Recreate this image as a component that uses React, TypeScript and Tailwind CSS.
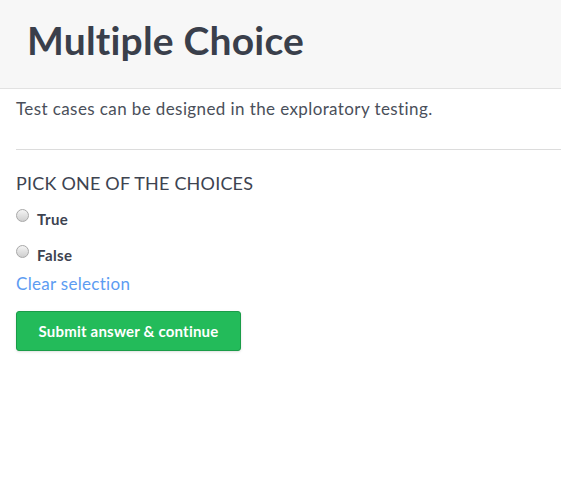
export default function App() {
  return (
    <div className="min-h-screen bg-white text-[#3d4350]" style={{ fontFamily: 'Lato, "Open Sans", sans-serif' }}>
      <div className="h-[89px] border-b border-[#e2e2e2] bg-[#f7f7f7] px-[27px] pt-[15px]">
        <h1 className="text-[39px] font-bold leading-[50px] tracking-[0.2px] text-[#3a3f4b]">Multiple Choice</h1>
      </div>
      <div className="pl-4">
        <p className="pt-[9px] text-[17px] leading-[22px] tracking-[0.4px] text-[#4a4f5a]">Test cases can be designed in the exploratory testing.</p>
        <div className="mt-[29px] border-t border-[#dcdcdc]" />
        <h2 className="mt-[22px] text-[18px] leading-[22px] tracking-[0.2px] uppercase text-[#3d4350]">Pick one of the choices</h2>
        <div className="mt-[15px] flex flex-col gap-[16px]">
          {['True', 'False'].map((c) => (
            <label key={c} className="flex h-[20px] items-start gap-[8px]">
              <span className="h-[13px] w-[13px] rounded-full border border-[#a8a8a8] bg-gradient-to-b from-[#f4f4f4] to-[#cfcfcf]" />
              <span className="text-[15px] font-bold leading-[20px] tracking-[0.4px] text-[#3d4350]">{c}</span>
            </label>
          ))}
        </div>
        <a className="mt-[8px] block text-[17px] leading-[22px] tracking-[0.3px] text-[#5c9cf2]">Clear selection</a>
        <button className="mt-[16px] h-[40px] w-[225px] rounded-[3px] border border-[#1a9c48] bg-[#23bb5a] text-[15px] font-bold tracking-[0.2px] text-white shadow-sm">
          Submit answer &amp; continue
        </button>
      </div>
    </div>
  )
}
